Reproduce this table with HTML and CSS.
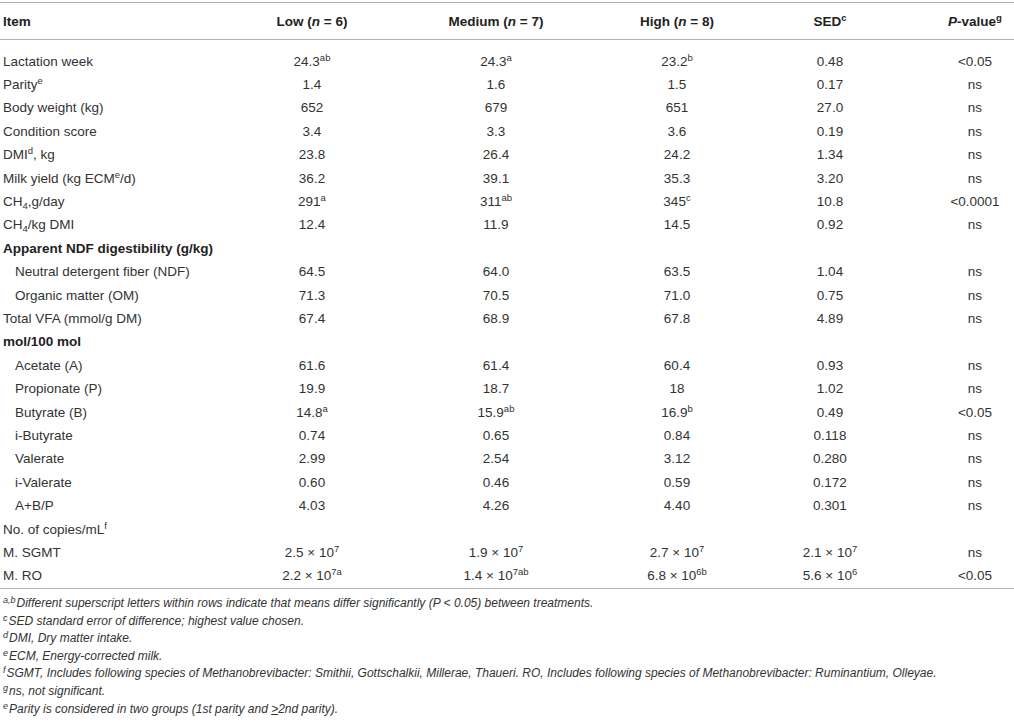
FILE: index.html
```html
<!DOCTYPE html>
<html>
<head>
<meta charset="utf-8">
<link rel="stylesheet" href="styles.css">
</head>
<body>
<div class="page">
<table class="data">
<colgroup>
<col class="c-item"><col class="c-low"><col class="c-med"><col class="c-high"><col class="c-sed"><col class="c-p">
</colgroup>
<thead>
<tr>
<th class="item">Item</th>
<th>Low (<i>n</i> = 6)</th>
<th>Medium (<i>n</i> = 7)</th>
<th>High (<i>n</i> = 8)</th>
<th>SED<sup>c</sup></th>
<th><i>P</i>-value<sup>g</sup></th>
</tr>
</thead>
<tbody>
<tr class="first"><td class="item">Lactation week</td><td>24.3<sup>ab</sup></td><td>24.3<sup>a</sup></td><td>23.2<sup>b</sup></td><td>0.48</td><td>&lt;0.05</td></tr>
<tr><td class="item">Parity<sup>e</sup></td><td>1.4</td><td>1.6</td><td>1.5</td><td>0.17</td><td>ns</td></tr>
<tr><td class="item">Body weight (kg)</td><td>652</td><td>679</td><td>651</td><td>27.0</td><td>ns</td></tr>
<tr><td class="item">Condition score</td><td>3.4</td><td>3.3</td><td>3.6</td><td>0.19</td><td>ns</td></tr>
<tr><td class="item">DMI<sup>d</sup>, kg</td><td>23.8</td><td>26.4</td><td>24.2</td><td>1.34</td><td>ns</td></tr>
<tr><td class="item">Milk yield (kg ECM<sup>e</sup>/d)</td><td>36.2</td><td>39.1</td><td>35.3</td><td>3.20</td><td>ns</td></tr>
<tr><td class="item">CH<sub>4</sub>,g/day</td><td>291<sup>a</sup></td><td>311<sup>ab</sup></td><td>345<sup>c</sup></td><td>10.8</td><td>&lt;0.0001</td></tr>
<tr><td class="item">CH<sub>4</sub>/kg DMI</td><td>12.4</td><td>11.9</td><td>14.5</td><td>0.92</td><td>ns</td></tr>
<tr><td class="item section">Apparent NDF digestibility (g/kg)</td><td></td><td></td><td></td><td></td><td></td></tr>
<tr><td class="item sub">Neutral detergent fiber (NDF)</td><td>64.5</td><td>64.0</td><td>63.5</td><td>1.04</td><td>ns</td></tr>
<tr><td class="item sub">Organic matter (OM)</td><td>71.3</td><td>70.5</td><td>71.0</td><td>0.75</td><td>ns</td></tr>
<tr><td class="item">Total VFA (mmol/g DM)</td><td>67.4</td><td>68.9</td><td>67.8</td><td>4.89</td><td>ns</td></tr>
<tr><td class="item section">mol/100 mol</td><td></td><td></td><td></td><td></td><td></td></tr>
<tr><td class="item sub">Acetate (A)</td><td>61.6</td><td>61.4</td><td>60.4</td><td>0.93</td><td>ns</td></tr>
<tr><td class="item sub">Propionate (P)</td><td>19.9</td><td>18.7</td><td>18</td><td>1.02</td><td>ns</td></tr>
<tr><td class="item sub">Butyrate (B)</td><td>14.8<sup>a</sup></td><td>15.9<sup>ab</sup></td><td>16.9<sup>b</sup></td><td>0.49</td><td>&lt;0.05</td></tr>
<tr><td class="item sub">i-Butyrate</td><td>0.74</td><td>0.65</td><td>0.84</td><td>0.118</td><td>ns</td></tr>
<tr><td class="item sub">Valerate</td><td>2.99</td><td>2.54</td><td>3.12</td><td>0.280</td><td>ns</td></tr>
<tr><td class="item sub">i-Valerate</td><td>0.60</td><td>0.46</td><td>0.59</td><td>0.172</td><td>ns</td></tr>
<tr><td class="item sub">A+B/P</td><td>4.03</td><td>4.26</td><td>4.40</td><td>0.301</td><td>ns</td></tr>
<tr><td class="item">No. of copies/mL<sup>f</sup></td><td></td><td></td><td></td><td></td><td></td></tr>
<tr><td class="item">M. SGMT</td><td>2.5 × 10<sup>7</sup></td><td>1.9 × 10<sup>7</sup></td><td>2.7 × 10<sup>7</sup></td><td>2.1 × 10<sup>7</sup></td><td>ns</td></tr>
<tr><td class="item">M. RO</td><td>2.2 × 10<sup>7a</sup></td><td>1.4 × 10<sup>7ab</sup></td><td>6.8 × 10<sup>6b</sup></td><td>5.6 × 10<sup>6</sup></td><td>&lt;0.05</td></tr>
</tbody>
</table>
<div class="notes">
<p><sup>a,b</sup>Different superscript letters within rows indicate that means differ significantly (P &lt; 0.05) between treatments.</p>
<p><sup>c</sup>SED standard error of difference; highest value chosen.</p>
<p><sup>d</sup>DMI, Dry matter intake.</p>
<p><sup>e</sup>ECM, Energy-corrected milk.</p>
<p><sup>f</sup>SGMT, Includes following species of Methanobrevibacter: Smithii, Gottschalkii, Millerae, Thaueri. RO, Includes following species of Methanobrevibacter: Ruminantium, Olleyae.</p>
<p><sup>g</sup>ns, not significant.</p>
<p><sup>e</sup>Parity is considered in two groups (1st parity and <u>&gt;</u>2nd parity).</p>
</div>
</div>
</body>
</html>
```

FILE: styles.css
```css
html, body {
  margin: 0;
  padding: 0;
  background: #ffffff;
}

.page {
  padding-top: 2px;
  font-family: "Liberation Sans", Arial, sans-serif;
  color: #333333;
}

.data {
  width: 1014px;
  border-collapse: collapse;
  table-layout: fixed;
  font-size: 13.5px;
  border-top: 1px solid #b3b3b3;
  border-bottom: 1px solid #b3b3b3;
}

.c-item { width: 262px; }
.c-low { width: 100px; }
.c-med { width: 268px; }
.c-high { width: 94px; }
.c-sed { width: 212px; }
.c-p { width: 78px; }

.data th {
  font-weight: bold;
  color: #222222;
  text-align: center;
  height: 36px;
  padding: 0;
  border-bottom: 1px solid #b3b3b3;
  white-space: nowrap;
}

.data td {
  text-align: center;
  padding: 0;
  height: 23.4px;
  line-height: 16px;
  white-space: nowrap;
}

.data tr.first td {
  padding-top: 10px;
}

.data .item {
  text-align: left;
  padding-left: 3px;
}

.data td.sub {
  padding-left: 15px;
}

.data td.section {
  font-weight: bold;
  color: #222222;
}

.data sup {
  font-size: 9.5px;
  line-height: 0;
  vertical-align: 5px;
}

.data sub {
  font-size: 9.5px;
  line-height: 0;
  vertical-align: -3px;
}

.notes {
  margin-top: 6px;
  padding-left: 3px;
  font-size: 12px;
  font-style: italic;
}

.notes p {
  margin: 0;
  line-height: 17.6px;
}

.notes sup {
  font-size: 9px;
  line-height: 0;
  vertical-align: 4px;
  margin-right: 1px;
}
```
